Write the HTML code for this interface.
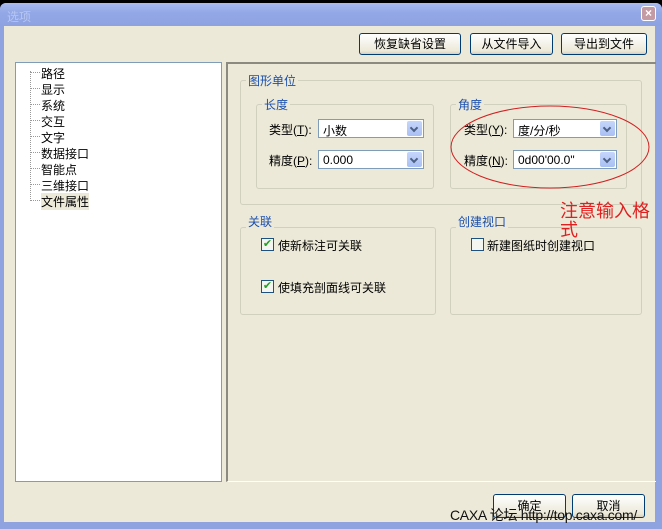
<!DOCTYPE html>
<html><head><meta charset="utf-8"><style>
*{box-sizing:border-box;margin:0;padding:0}
body{width:662px;height:529px;background:#000;position:relative;overflow:hidden;font-family:"Liberation Sans","Noto Sans CJK SC",sans-serif;font-size:12px;color:#000}
.a{position:absolute}
.win{left:0;top:3px;width:662px;height:526px;background:#8fa3e0;border-radius:6px 6px 0 0}
.title{left:0;top:3px;width:662px;height:23px;background:linear-gradient(#a9bbef,#93a8e6 40%,#8ea2e2);border-radius:6px 6px 0 0}
.body{left:4px;top:26px;width:651px;height:496px;background:#ece9d8}
.btn{background:linear-gradient(#fff,#ece9d8 85%,#d6d0c0);border:1px solid #003c74;border-radius:3px;text-align:center;font-size:12px}
.fs{border:1px solid #d0d0bf;border-radius:3px}
.lg{background:#ece9d8;color:#1a4fae;padding:0 2px;font-size:12px}
.combo{background:#fff;border:1px solid #7f9db9;height:19px;font-size:12px;padding:2px 0 0 4px}
.combo i{position:absolute;right:1px;top:1px;width:15px;height:15px;background:linear-gradient(#c6d6fb,#a9c0f4);border-radius:2px}
.combo i:after{content:"";position:absolute;left:4px;top:4px;width:4px;height:4px;border-right:2px solid #4d6185;border-bottom:2px solid #4d6185;transform:rotate(45deg)}
.cb{width:13px;height:13px;border:1px solid #1c5180;background:#f4f4f0}
.tree div{position:absolute;left:25px;font-size:12px}
.dot{position:absolute;left:14px;width:10px;border-top:1px dotted #999}
</style></head><body>
<div class="a win"></div>
<div class="a title"></div>
<div class="a" style="left:7px;top:8px;color:#b6c6f2;font-size:12px">选项</div>
<div class="a" style="left:641px;top:6px;width:15px;height:15px;background:#c49aa5;border:1px solid #fff;border-radius:3px;color:#fff;font-size:12px;line-height:12px;text-align:center;font-weight:bold">×</div>
<div class="a body"></div>
<div class="a btn" style="left:359px;top:33px;width:102px;height:22px;line-height:20px">恢复缺省设置</div>
<div class="a btn" style="left:470px;top:33px;width:83px;height:22px;line-height:20px">从文件导入</div>
<div class="a btn" style="left:561px;top:33px;width:86px;height:22px;line-height:20px">导出到文件</div>
<div class="a tree" style="left:15px;top:62px;width:207px;height:420px;background:#fff;border:1px solid #7f9db9">
<div style="position:absolute;left:14px;top:8px;height:128px;border-left:1px dotted #999"></div>
<span class="dot" style="top:9px"></span><div style="top:2px">路径</div>
<span class="dot" style="top:25px"></span><div style="top:18px">显示</div>
<span class="dot" style="top:41px"></span><div style="top:34px">系统</div>
<span class="dot" style="top:57px"></span><div style="top:50px">交互</div>
<span class="dot" style="top:73px"></span><div style="top:66px">文字</div>
<span class="dot" style="top:89px"></span><div style="top:82px">数据接口</div>
<span class="dot" style="top:105px"></span><div style="top:98px">智能点</div>
<span class="dot" style="top:121px"></span><div style="top:114px">三维接口</div>
<span class="dot" style="top:137px"></span><div style="top:130px;background:#ece9d8">文件属性</div>
</div>
<div class="a" style="left:226px;top:62px;width:430px;height:420px;border-left:2px solid #8a8a80;border-top:2px solid #8a8a80;border-bottom:1px solid #fff"></div>
<div class="a fs" style="left:240px;top:80px;width:402px;height:125px"></div>
<div class="a lg" style="left:246px;top:72px">图形单位</div>
<div class="a fs" style="left:256px;top:104px;width:178px;height:85px"></div>
<div class="a lg" style="left:262px;top:96px">长度</div>
<div class="a fs" style="left:450px;top:104px;width:177px;height:85px"></div>
<div class="a lg" style="left:456px;top:96px">角度</div>
<div class="a" style="left:269px;top:121px">类型(<u>T</u>):</div>
<div class="a combo" style="left:318px;top:119px;width:106px">小数<i></i></div>
<div class="a" style="left:269px;top:152px">精度(<u>P</u>):</div>
<div class="a combo" style="left:318px;top:150px;width:106px">0.000<i></i></div>
<div class="a" style="left:464px;top:121px">类型(<u>Y</u>):</div>
<div class="a combo" style="left:513px;top:119px;width:104px">度/分/秒<i></i></div>
<div class="a" style="left:464px;top:152px">精度(<u>N</u>):</div>
<div class="a combo" style="left:513px;top:150px;width:104px">0d00'00.0"<i></i></div>
<div class="a fs" style="left:240px;top:227px;width:196px;height:88px"></div>
<div class="a lg" style="left:246px;top:213px">关联</div>
<div class="a fs" style="left:450px;top:227px;width:192px;height:88px"></div>
<div class="a lg" style="left:456px;top:213px">创建视口</div>
<div class="a cb" style="left:261px;top:238px;color:#21a121;font-size:11px;line-height:10px;text-align:center">✔</div>
<div class="a" style="left:278px;top:237px">使新标注可关联</div>
<div class="a cb" style="left:261px;top:280px;color:#21a121;font-size:11px;line-height:10px;text-align:center">✔</div>
<div class="a" style="left:278px;top:279px">使填充剖面线可关联</div>
<div class="a cb" style="left:471px;top:238px"></div>
<div class="a" style="left:487px;top:237px">新建图纸时创建视口</div>
<svg class="a" style="left:0;top:0" width="662" height="529"><ellipse cx="550" cy="147" rx="99" ry="41" fill="none" stroke="#d02020" stroke-width="1"/></svg>
<div class="a" style="left:560px;top:202px;width:95px;color:#e02020;font-size:18px;line-height:19px;word-break:break-all">注意输入格式</div>
<div class="a btn" style="left:493px;top:494px;width:73px;height:24px;line-height:22px">确定</div>
<div class="a btn" style="left:572px;top:494px;width:73px;height:24px;line-height:22px">取消</div>
<div class="a" style="left:450px;top:505px;font-size:14px;letter-spacing:-0.3px;color:#111">CAXA 论坛 http://top.caxa.com/</div>
</body></html>
